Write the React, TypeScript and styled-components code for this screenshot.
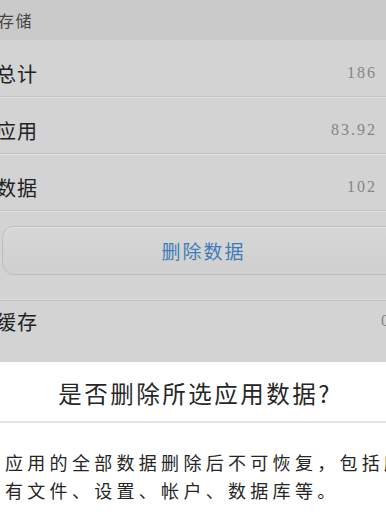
import React from 'react';
import styled, { createGlobalStyle } from 'styled-components';

const Global = createGlobalStyle`
  html, body {
    margin: 0;
    padding: 0;
    background: #ffffff;
    overflow: hidden;
  }
  body {
    width: 386px;
    height: 529px;
    font-family: "Noto Sans CJK SC", "Noto Sans", sans-serif;
  }
`;

const Screen = styled.div`
  width: 386px;
  height: 529px;
  overflow: hidden;
  background: #ffffff;
`;

const Backdrop = styled.div`
  height: 362px;
  overflow: hidden;
  background: #d3d3d3;
`;

const Panel = styled.div`
  margin-left: -4px;
  width: 410px;
`;

const SectionHeader = styled.div`
  height: 40px;
  display: flex;
  align-items: center;
  padding-left: 2px;
  background: #cacaca;
  color: #444;
  font-size: 16px;
  letter-spacing: 1.5px;
`;

const Row = styled.div<{ $compact?: boolean }>`
  box-sizing: border-box;
  height: ${p => (p.$compact ? 40 : 57)}px;
  padding-top: ${p => (p.$compact ? 0 : 10)}px;
  display: flex;
  align-items: center;
  justify-content: space-between;
  border-bottom: ${p => (p.$compact ? 'none' : '1px solid #c3c3c3')};
  box-shadow: ${p => (p.$compact ? 'none' : '0 1px 0 #e2e2e2')};
`;

const Label = styled.span`
  font-size: 20px;
  letter-spacing: 1px;
  color: #222;
`;

const Value = styled.span<{ $edge: number }>`
  padding-right: ${p => p.$edge}px;
  font-family: "Liberation Serif", "DejaVu Serif", serif;
  font-size: 16px;
  letter-spacing: 2px;
  color: #858585;
`;

const ButtonWrap = styled.div`
  box-sizing: border-box;
  height: 90px;
  padding: 15px 1px 0 6px;
  border-bottom: 1px solid #c0c0c0;
  box-shadow: inset 0 -12px 0 -11px #dedede;
`;

const WideButton = styled.button`
  width: 100%;
  height: 49px;
  border: 1px solid #bdbdbd;
  border-radius: 12px;
  background: linear-gradient(#d7d7d7, #cfcfcf);
  box-shadow: inset 0 1px 0 #e4e4e4;
  font-family: "Noto Sans CJK SC", sans-serif;
  font-size: 19px;
  letter-spacing: 2px;
  color: #3f7bb8;
  padding: 0;
`;

const Dialog = styled.div`
  background: #ffffff;
`;

const Title = styled.div`
  height: 61px;
  display: flex;
  align-items: center;
  justify-content: center;
  padding: 2px 0 0 4px;
  box-sizing: border-box;
  border-bottom: 2px solid #e4e4e4;
  font-size: 23.5px;
  letter-spacing: 2.5px;
  color: #262626;
`;

const Message = styled.p`
  margin: 0;
  padding: 25px 0 0 5px;
  white-space: nowrap;
  font-size: 18px;
  line-height: 28px;
  letter-spacing: 4.3px;
  color: #262626;
`;

const rows = [
  { label: '总计', value: '186' },
  { label: '应用', value: '83.92' },
  { label: '数据', value: '102' },
];

export default function App() {
  return (
    <Screen>
      <Global />
      <Backdrop>
        <Panel>
          <SectionHeader>存储</SectionHeader>
          {rows.map(r => (
            <Row key={r.label}>
              <Label>{r.label}</Label>
              <Value $edge={29}>{r.value}</Value>
            </Row>
          ))}
          <ButtonWrap>
            <WideButton>删除数据</WideButton>
          </ButtonWrap>
          <Row $compact>
            <Label>缓存</Label>
            <Value $edge={15}>0</Value>
          </Row>
        </Panel>
      </Backdrop>
      <Dialog>
        <Title>是否删除所选应用数据?</Title>
        <Message>
          应用的全部数据删除后不可恢复，包括所
          <br />
          有文件、设置、帐户、数据库等。
        </Message>
      </Dialog>
    </Screen>
  );
}
